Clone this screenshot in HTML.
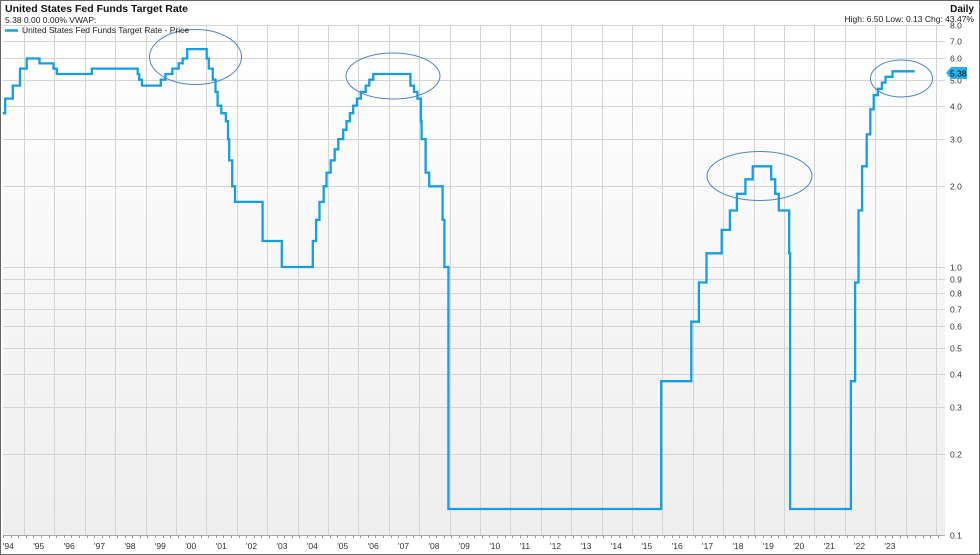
<!DOCTYPE html>
<html><head><meta charset="utf-8"><style>
html,body{margin:0;padding:0;background:#fff;}
body{width:980px;height:555px;overflow:hidden;font-family:"Liberation Sans",sans-serif;}
svg{display:block}
</style></head><body>
<svg id="c" width="980" height="555" xmlns="http://www.w3.org/2000/svg" font-family="Liberation Sans, sans-serif">
<defs><linearGradient id="bg" x1="0" y1="0" x2="0" y2="1"><stop offset="0" stop-color="#ffffff"/><stop offset="1" stop-color="#eeeeee"/></linearGradient></defs>
<rect x="0.5" y="0.5" width="979" height="554" fill="#fff" stroke="#666"/>
<rect x="3" y="25" width="942" height="510" fill="url(#bg)"/>
<g id="grid" stroke="#d4d4d4" stroke-width="1"></g>
<line x1="3" y1="535.5" x2="945" y2="535.5" stroke="#aaa"/>
<g id="ticks" stroke="#999"></g>
<g id="ylab" font-size="8.5" fill="#333"></g>
<g id="xlab" font-size="8.5" fill="#333"></g>
<path id="line" fill="none" stroke="#14a0e0" stroke-width="2.3" stroke-linejoin="miter"/>
<g fill="none" stroke="#4a86c8" stroke-width="1">
<ellipse cx="195.5" cy="57" rx="46" ry="27.5"/>
<ellipse cx="393" cy="76" rx="47" ry="23"/>
<ellipse cx="759.5" cy="176" rx="52.5" ry="24.5"/>
<ellipse cx="901.5" cy="78.5" rx="31" ry="18.5"/>
</g>
<text x="5" y="12" font-size="10.5" font-weight="bold" fill="#111">United States Fed Funds Target Rate</text>
<text x="5" y="23" font-size="8.5" fill="#222">5.38 0.00 0.00%  VWAP:</text>
<line x1="5" y1="30.5" x2="18" y2="30.5" stroke="#14a0e0" stroke-width="2.5"/>
<text x="22" y="33" font-size="8.5" fill="#222">United States Fed Funds Target Rate - Price</text>
<text x="974" y="12" font-size="10" font-weight="bold" fill="#111" text-anchor="end">Daily</text>
<text x="974" y="22" font-size="8.5" fill="#222" text-anchor="end">High: 6.50 Low: 0.13 Chg: 43.47%</text>
<path d="M946 73 L951 67 L967 67 L967 79 L951 79 Z" fill="#2cb0ea"/>
<text x="950" y="76.5" font-size="8.5" fill="#000">5.38</text>
</svg>
<script>
(function(){
var ns="http://www.w3.org/2000/svg";
function Y(v){return 267-268*Math.log10(v);}
function X(t){return 24+30.4*(t-1995);}
function el(p,n,a,txt){var e=document.createElementNS(ns,n);for(var k in a)e.setAttribute(k,a[k]);if(txt)e.textContent=txt;document.getElementById(p).appendChild(e);}
var vals=[8,7,6,5,4,3,2,1,0.9,0.8,0.7,0.6,0.5,0.4,0.3,0.2,0.1];
vals.forEach(function(v){var y=Math.round(Y(v))+0.5;if(v!==0.1)el("grid","line",{x1:3,x2:945,y1:y,y2:y});
el("ylab","text",{x:950,y:y+3},v.toFixed(1));});
for(var k=0;k<31;k++){var x=Math.round(24+30.4*k)+0.5;if(x<945)el("grid","line",{x1:x,x2:x,y1:25,y2:535});}
for(var i=0;i<124;i++){var x=Math.round(3+i*7.6)+0.5;el("ticks","line",{x1:x,x2:x,y1:535,y2:538});}
for(var yr=1994;yr<=2023;yr++){var s="'"+String(yr).slice(2);el("xlab","text",{x:X(yr+0.5)-6,y:549},s);}
var d=[[1994.3,3.75],[1994.38,4.25],[1994.63,4.75],[1994.87,5.5],[1995.09,6.0],[1995.51,5.75],[1995.97,5.5],[1996.08,5.25],[1997.23,5.5],[1998.74,5.25],[1998.79,5.0],[1998.88,4.75],[1999.5,5.0],[1999.65,5.25],[1999.88,5.5],[2000.09,5.75],[2000.22,6.0],[2000.37,6.5],[2001.01,6.0],[2001.08,5.5],[2001.21,5.0],[2001.3,4.5],[2001.37,4.0],[2001.49,3.75],[2001.64,3.5],[2001.71,3.0],[2001.75,2.5],[2001.85,2.0],[2001.94,1.75],[2002.85,1.25],[2003.48,1.0],[2004.5,1.25],[2004.61,1.5],[2004.72,1.75],[2004.86,2.0],[2004.95,2.25],[2005.09,2.5],[2005.22,2.75],[2005.34,3.0],[2005.5,3.25],[2005.61,3.5],[2005.72,3.75],[2005.83,4.0],[2005.95,4.25],[2006.08,4.5],[2006.24,4.75],[2006.36,5.0],[2006.49,5.25],[2007.71,4.75],[2007.83,4.5],[2007.94,4.25],[2008.06,3.5],[2008.08,3.0],[2008.21,2.25],[2008.33,2.0],[2008.77,1.5],[2008.83,1.0],[2008.96,0.125],[2015.96,0.375],[2016.95,0.625],[2017.2,0.875],[2017.45,1.125],[2017.95,1.375],[2018.22,1.625],[2018.45,1.875],[2018.73,2.125],[2018.97,2.375],[2019.58,2.125],[2019.71,1.875],[2019.83,1.625],[2020.17,1.125],[2020.2,0.125],[2022.2,0.375],[2022.34,0.875],[2022.45,1.625],[2022.57,2.375],[2022.72,3.125],[2022.84,3.875],[2022.95,4.375],[2023.09,4.625],[2023.22,4.875],[2023.34,5.125],[2023.57,5.375]];
var p="M"+X(d[0][0]).toFixed(1)+" "+Y(d[0][1]).toFixed(1);
for(var j=1;j<d.length;j++){var x=X(d[j][0]).toFixed(1);p+=" H"+x+" V"+Y(d[j][1]).toFixed(1);}
p+=" H"+X(2024.3).toFixed(1);
document.getElementById("line").setAttribute("d",p);
})();
</script>
</body></html>
